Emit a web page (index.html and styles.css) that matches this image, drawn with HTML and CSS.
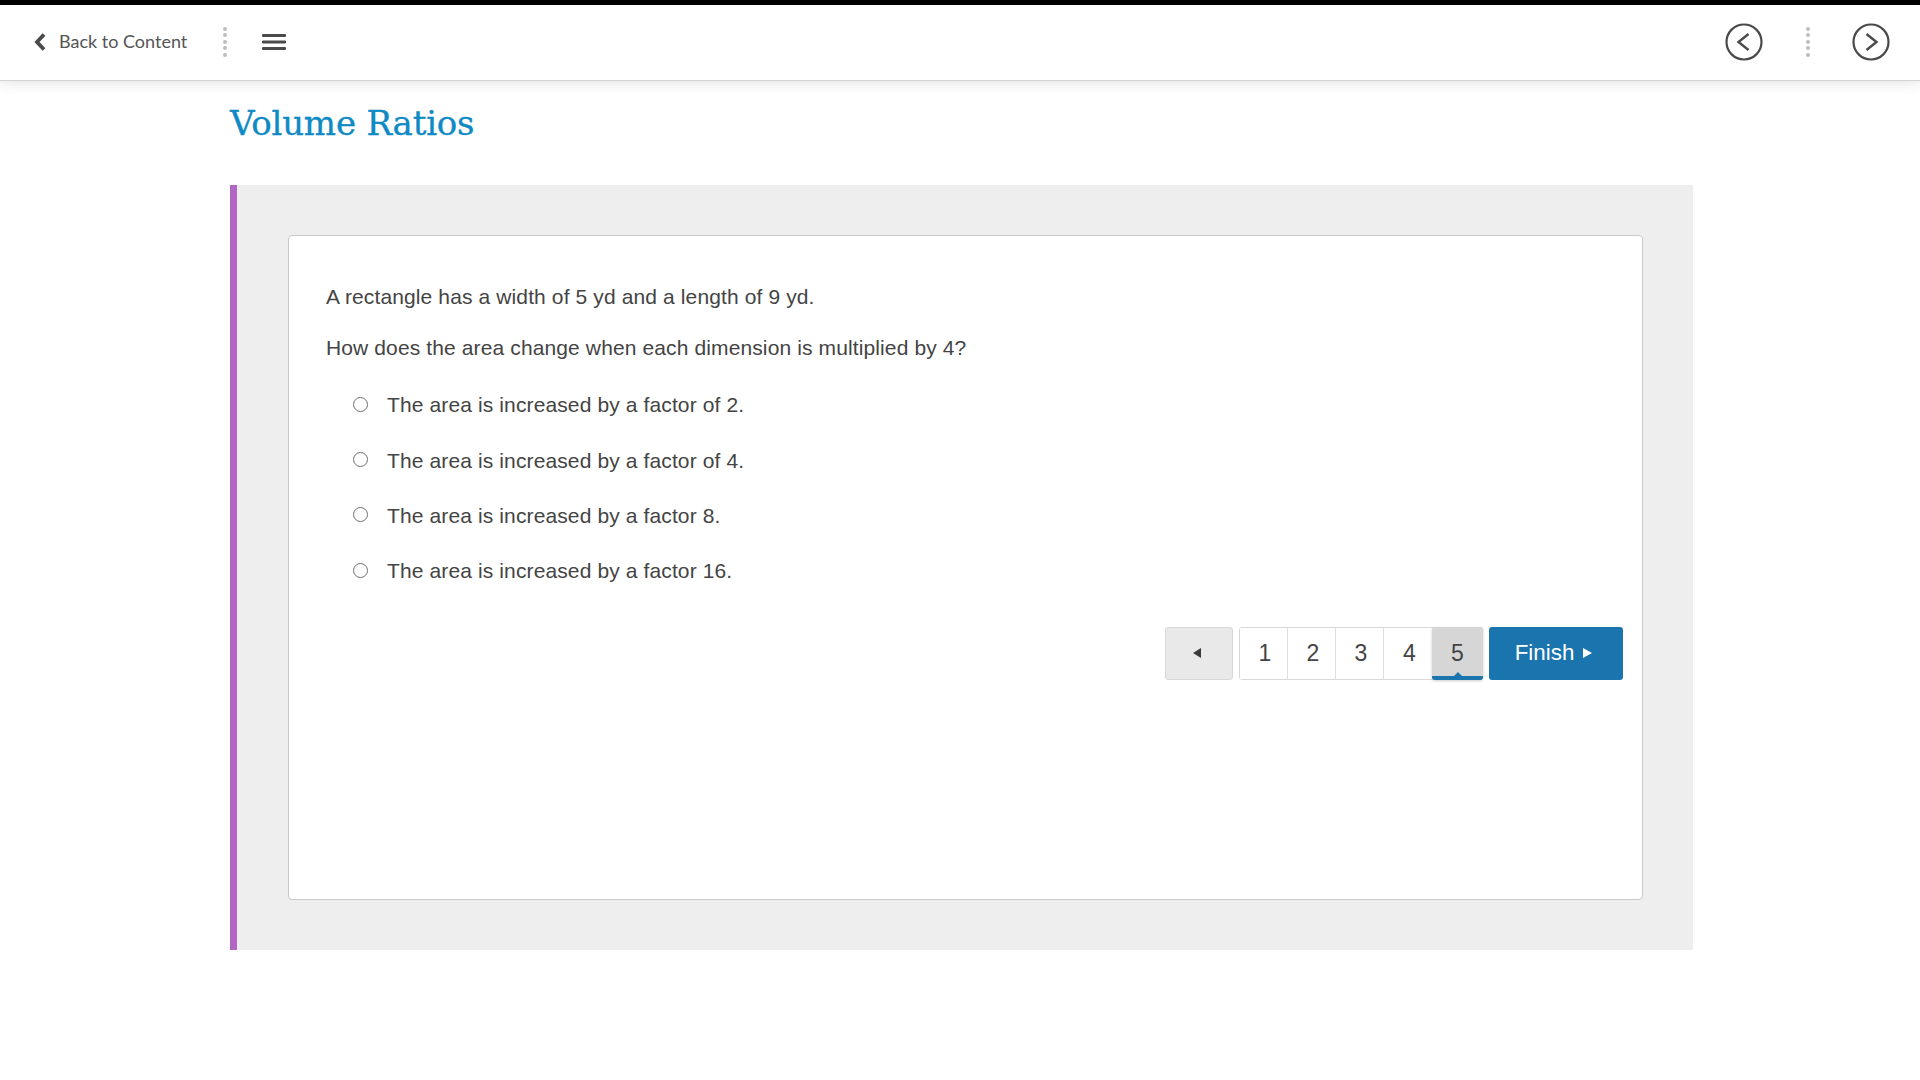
FILE: index.html
```html
<!DOCTYPE html>
<html lang="en">
<head>
<meta charset="utf-8">
<title>Volume Ratios</title>
<link rel="stylesheet" href="styles.css">
</head>
<body>
<header class="topbar">
  <div class="nav-left">
    <a class="back">
      <svg class="back-icon" width="14" height="18" viewBox="0 0 14 18"><path d="M11 1.5 L4 9 L11 16.5" fill="none" stroke="#4a4a4a" stroke-width="3.8"/></svg>
      <span class="back-text">Back to Content</span>
    </a>
    <span class="dots"><i></i><i></i><i></i><i></i><i></i></span>
    <svg class="menu" width="24" height="18" viewBox="0 0 24 18"><path d="M1 2.5h22M1 9h22M1 15.5h22" stroke="#4a4a4a" stroke-width="2.8" stroke-linecap="round"/></svg>
  </div>
  <div class="nav-right">
    <svg class="circle-prev" width="38" height="38" viewBox="0 0 38 38"><circle cx="19" cy="19" r="17.5" fill="none" stroke="#4a4a4a" stroke-width="2.2"/><path d="M23.5 11 L13.5 19 L23.5 27" fill="none" stroke="#4a4a4a" stroke-width="2.4"/></svg>
    <span class="dots"><i></i><i></i><i></i><i></i><i></i></span>
    <svg width="38" height="38" viewBox="0 0 38 38"><circle cx="19" cy="19" r="17.5" fill="none" stroke="#4a4a4a" stroke-width="2.2"/><path d="M14.5 11 L24.5 19 L14.5 27" fill="none" stroke="#4a4a4a" stroke-width="2.4"/></svg>
  </div>
</header>
<main class="content">
  <h1 class="title">Volume Ratios</h1>
  <section class="panel">
    <div class="card">
      <p class="q">A rectangle has a width of 5 yd and a length of 9 yd.</p>
      <p class="q">How does the area change when each dimension is multiplied by 4?</p>
      <ul class="options">
        <li><span class="radio"></span>The area is increased by a factor of 2.</li>
        <li><span class="radio"></span>The area is increased by a factor of 4.</li>
        <li><span class="radio"></span>The area is increased by a factor 8.</li>
        <li><span class="radio"></span>The area is increased by a factor 16.</li>
      </ul>
      <div class="pager">
        <button class="prev"><span class="tri-left"></span></button>
        <div class="pages">
          <button class="page">1</button>
          <button class="page">2</button>
          <button class="page">3</button>
          <button class="page">4</button>
          <button class="page current">5</button>
        </div>
        <button class="finish">Finish<span class="tri-right"></span></button>
      </div>
    </div>
  </section>
</main>
</body>
</html>
```
FILE: styles.css
```css
* { box-sizing: border-box; }
html, body { margin: 0; padding: 0; background: #fff; }
body { height: 1080px; overflow: hidden; font-family: "Liberation Sans", Arial, sans-serif; color: #444; }
.topbar {
  height: 81px;
  border-top: 5px solid #000;
  border-bottom: 1px solid #d4d4d4;
  box-shadow: 0 3px 12px rgba(0,0,0,.1);
  display: flex;
  justify-content: space-between;
  align-items: center;
  padding: 0 30px 2px 33px;
  background: #fff;
}
.nav-left { display: flex; align-items: center; }
.back { display: flex; align-items: center; gap: 12px; font-family: Lato, sans-serif; font-size: 18px; color: #555; width: 190px; }
.back-text { padding-bottom: 2px; }
.dots { display: flex; flex-direction: column; gap: 2.5px; width: 4px; }
.dots i { display: block; width: 4px; height: 4px; border-radius: 50%; background: #bdbdbd; }
.menu { margin-left: 35px; }
.nav-right { display: flex; align-items: center; gap: 42px; }
.circle-prev { margin-right: 1px; }
.content { width: 1463px; margin-left: 230px; }
.title { margin: 19px 0 0; height: 85px; font-family: "DejaVu Serif", serif; font-weight: 400; font-size: 34px; line-height: 46px; letter-spacing: -.2px; -webkit-text-stroke: .35px #0e8ac4; color: #0e8ac4; }
.panel { width: 1463px; height: 765px; background: #eee; border-left: 7px solid #b266c4; padding: 50px 50px 49px 51px; }
.card { height: 665px; background: #fff; border: 1px solid #c8c8c8; border-radius: 4px; padding: 48.5px 19px 0 37px; }
.q { margin: 0 0 28.4px; font-size: 21px; line-height: 23px; letter-spacing: .12px; color: #444; }
.options { list-style: none; margin: 34.5px 0 0; padding: 0 0 0 27px; }
.options li { display: flex; align-items: center; height: 23px; margin-bottom: 32.3px; font-size: 21px; line-height: 23px; letter-spacing: .12px; }
.radio { width: 15px; height: 15px; border: 1px solid #6f6f6f; border-radius: 50%; margin-right: 19px; flex: none; position: relative; top: -.5px; }
.pager { display: flex; justify-content: flex-end; margin-top: 44.5px; gap: 6px; }
.pager button { font-family: "Liberation Sans", Arial, sans-serif; margin: 0; height: 53px; }
.prev { width: 68px; padding: 0 4px 0 0; background: #e9e9e9; border: 1px solid #d8d8d8; border-radius: 3px; display: flex; align-items: center; justify-content: center; }
.tri-left { width: 0; height: 0; border-style: solid; border-width: 5px 8px 5px 0; border-color: transparent #3b3b3b transparent transparent; }
.pages { display: flex; height: 53px; border: 1px solid #d8d8d8; border-radius: 3px; background: #fff; }
.page { width: 48px; height: 51px !important; padding: 0 0 0 3px; border: 0; border-right: 1px solid #dedede; background: #fff; font-size: 23px; color: #444; }
.page:nth-child(4) { border-right: 0; }
.current { position: relative; width: 51px; margin: -1px -1px -1px 0 !important; height: 53px !important; padding: 4px 0 0; background: #d6d6d6; border: 0; border-bottom: 4px solid #1a74ad; border-radius: 3px; box-shadow: 0 1px 3px rgba(0,0,0,.2); }
.current::after { content: ""; position: absolute; left: 50%; bottom: 0; margin-left: -4px; border-style: solid; border-width: 0 4px 4px; border-color: transparent transparent #1a74ad; }
.finish { width: 134px; padding: 0 5px 0 0; background: #1a74ad; border: 0; border-radius: 3px; color: #fff; font-size: 22.4px; display: flex; align-items: center; justify-content: center; gap: 9px; }
.tri-right { width: 0; height: 0; border-style: solid; border-width: 5px 0 5px 9px; border-color: transparent transparent transparent #fff; }
```
